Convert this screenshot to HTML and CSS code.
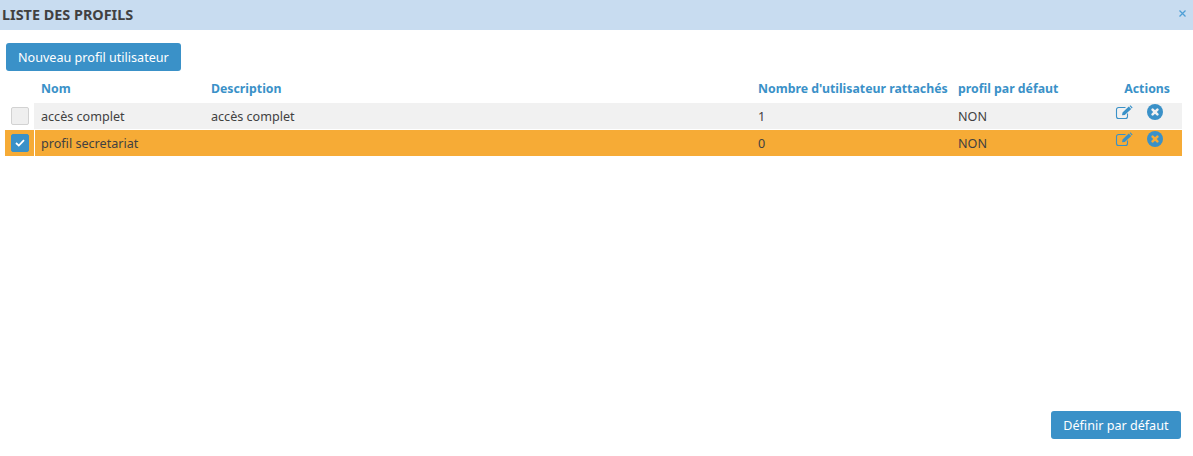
FILE: index.html
```html
<!DOCTYPE html>
<html lang="fr">
<head>
<meta charset="utf-8">
<title>Liste des profils</title>
<link rel="stylesheet" href="styles.css">
</head>
<body>
<div class="modal">
  <header class="titlebar">
    <h1 class="title">LISTE DES PROFILS</h1>
    <svg class="close" width="9" height="9" viewBox="0 0 9 9"><path d="M1.5 1.5l6 6M7.5 1.5l-6 6" stroke="#4f9fd6" stroke-width="1.3" fill="none"/></svg>
  </header>
  <main class="content">
    <div class="top"><button class="btn">Nouveau profil utilisateur</button></div>
    <div class="grid head">
      <div></div><div class="sep"></div>
      <div class="cell">Nom</div>
      <div class="cell">Description</div>
      <div class="cell">Nombre d'utilisateur rattachés</div>
      <div class="cell">profil par défaut</div>
      <div class="cell actions-head">Actions</div>
    </div>
    <div class="grid row row-off">
      <div class="check-cell"><span class="check"></span></div><div class="sep sep-off"></div>
      <div class="cell">accès complet</div>
      <div class="cell">accès complet</div>
      <div class="cell">1</div>
      <div class="cell">NON</div>
      <div class="cell actions">
        <svg class="edit" width="18" height="15" viewBox="0 0 18 15"><path d="M12.5 8.5v3a2 2 0 0 1-2 2h-7a2 2 0 0 1-2-2v-7a2 2 0 0 1 2-2h7" fill="none" stroke="#3a91c8" stroke-width="1.1"/><path d="M7 10.2l.5-2.6L13.8 1.6l2.4 2.4-6.4 6z M14.6.9l.8-.7 2.2 2.2-.8 1z" fill="#3a91c8"/></svg>
        <svg class="del" width="16" height="16" viewBox="0 0 16 16"><circle cx="8" cy="8" r="8" fill="#3a91c8"/><path d="M5.6 5.6l4.8 4.8M10.4 5.6l-4.8 4.8" stroke="#f1f1f1" stroke-width="2.6" stroke-linecap="round"/></svg>
      </div>
    </div>
    <div class="grid row row-on">
      <div class="check-cell"><span class="check checked"><svg width="10" height="8" viewBox="0 0 10 8"><path d="M1 4l2.8 2.6L9 1.2" fill="none" stroke="#fff" stroke-width="1.8"/></svg></span></div><div class="sep"></div>
      <div class="cell">profil secretariat</div>
      <div class="cell"></div>
      <div class="cell">0</div>
      <div class="cell">NON</div>
      <div class="cell actions">
        <svg class="edit" width="18" height="15" viewBox="0 0 18 15"><path d="M12.5 8.5v3a2 2 0 0 1-2 2h-7a2 2 0 0 1-2-2v-7a2 2 0 0 1 2-2h7" fill="none" stroke="#3a91c8" stroke-width="1.1"/><path d="M7 10.2l.5-2.6L13.8 1.6l2.4 2.4-6.4 6z M14.6.9l.8-.7 2.2 2.2-.8 1z" fill="#3a91c8"/></svg>
        <svg class="del" width="16" height="16" viewBox="0 0 16 16"><circle cx="8" cy="8" r="8" fill="#3a91c8"/><path d="M5.6 5.6l4.8 4.8M10.4 5.6l-4.8 4.8" stroke="#f6ab36" stroke-width="2.6" stroke-linecap="round"/></svg>
      </div>
    </div>
    <div class="bottom"><button class="btn btn-default">Définir par défaut</button></div>
  </main>
</div>
</body>
</html>
```

FILE: styles.css
```css
* { box-sizing: border-box; }
html, body { margin: 0; padding: 0; background: #fff; }
body { font-family: "Noto Sans", "Open Sans", sans-serif; font-size: 12.6px; color: #414141; }
.modal { width: 1193px; height: 456px; display: flex; flex-direction: column; }
.titlebar { height: 30px; flex: none; background: #c8dcf0; display: flex; align-items: center; justify-content: space-between; padding: 0 6px 2px 3px; }
.title { margin: 0 0 0 -1px; font-size: 14.4px; font-weight: 700; color: #414141; }
.close { margin-top: -1px; }
.content { flex: 1; display: flex; flex-direction: column; padding: 13px 11px 0 5px; }
.top { height: 28px; padding-left: 1px; }
.btn { height: 28px; border: 0; border-radius: 3px; background: #3a91c8; color: #fff; font: 12.6px "Noto Sans", "Open Sans", sans-serif; padding: 0 12px; display: block; }
.btn-default { padding: 0 12.5px; }
.grid { display: grid; grid-template-columns: 29px 1px 170px 547px 200px 166px 64px; align-items: center; }
.cell { padding-left: 6px; white-space: nowrap; }
.head { height: 30px; color: #3a91c8; font-size: 12.3px; font-weight: 700; margin-top: 2px; padding-top: 1px; }
.actions-head { padding-left: 0; text-align: right; padding-right: 12px; margin-left: -40px; }
.row { height: 26px; }
.row-off { margin-bottom: 1px; }
.row-off .cell { background: #f1f1f1; height: 26px; padding-top: 1px; line-height: 25px; }
.row-on { background: #f6ab36; }
.row-on .cell { height: 26px; padding-top: 1px; line-height: 25px; }
.sep { height: 26px; background: #fff; }
.sep-off { background: #f1f1f1; }
.check-cell { height: 26px; padding-left: 6px; display: flex; align-items: center; }
.check { width: 18px; height: 18px; border-radius: 2px; background: #efefef; border: 1px solid #d2d2d2; display: flex; align-items: center; justify-content: center; }
.checked { background: #3a91c8; border-color: #3a91c8; }
.row .actions { display: flex; align-items: flex-start; padding-left: 0; padding-top: 1px; }
.edit { margin-left: -3px; margin-top: 1px; }
.del { margin-left: 14px; }
.bottom { margin-top: auto; display: flex; justify-content: flex-end; margin-bottom: 17px; padding-right: 1px; }
```
